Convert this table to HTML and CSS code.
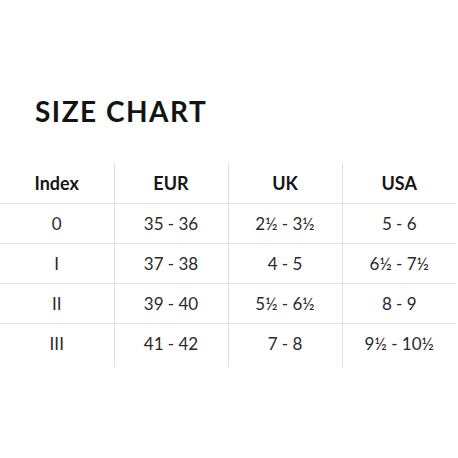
FILE: index.html
```html
<!DOCTYPE html>
<html>
<head>
<meta charset="utf-8">
<link rel="stylesheet" href="styles.css">
</head>
<body>
<div class="page">
  <h1 class="title">SIZE CHART</h1>
  <table class="chart">
    <thead>
      <tr><th>Index</th><th>EUR</th><th>UK</th><th>USA</th></tr>
    </thead>
    <tbody>
      <tr><td>0</td><td>35 - 36</td><td>2½ - 3½</td><td>5 - 6</td></tr>
      <tr><td>I</td><td>37 - 38</td><td>4 - 5</td><td>6½ - 7½</td></tr>
      <tr><td>II</td><td>39 - 40</td><td>5½ - 6½</td><td>8 - 9</td></tr>
      <tr class="last"><td>III</td><td>41 - 42</td><td>7 - 8</td><td>9½ - 10½</td></tr>
    </tbody>
  </table>
</div>
</body>
</html>
```

FILE: styles.css
```css
html, body {
  margin: 0;
  padding: 0;
  background: #ffffff;
}
.page {
  width: 458px;
  height: 458px;
  font-family: "Lato", "Liberation Sans", sans-serif;
  color: #1a1a1a;
}
.title {
  margin: 0;
  padding: 93px 0 0 35px;
  font-size: 28px;
  line-height: 36px;
  font-weight: 700;
  letter-spacing: 1.5px;
  color: #141414;
}
.chart {
  margin-top: 34px;
  width: 456px;
  border-collapse: collapse;
  table-layout: fixed;
}
.chart th, .chart td {
  width: 114px;
  height: 40px;
  padding: 0;
  text-align: center;
  vertical-align: middle;
  box-sizing: border-box;
}
.chart th + th, .chart td + td {
  border-left: 1px solid #e0e0e0;
}
.chart th {
  font-size: 18px;
  font-weight: 700;
  color: #161616;
  border-bottom: 1px solid #e0e0e0;
}
.chart td {
  font-size: 17px;
  font-weight: 400;
  color: #2a2a2a;
  border-bottom: 1px solid #e0e0e0;
}
.chart tr.last td {
  border-bottom: none;
  height: 44px;
  padding-bottom: 4px;
}
```
